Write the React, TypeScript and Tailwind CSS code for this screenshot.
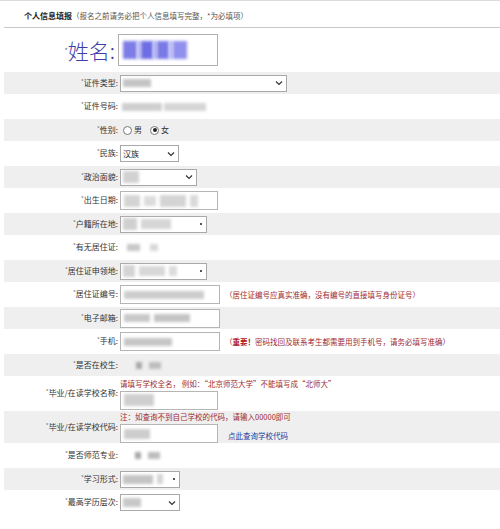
import React from "react";

const F = "font-['Noto_Sans_CJK_SC',_'Noto_Sans',_sans-serif]";

function Blur({ className }: { className: string }) {
  return <span className={`inline-block blur-[1.5px] ${className}`} />;
}

function Chevron() {
  return (
    <svg width="8" height="6" viewBox="0 0 8 6" className="shrink-0">
      <path d="M1 1.5 L4 4.5 L7 1.5" fill="none" stroke="#333" strokeWidth="1.2" />
    </svg>
  );
}

function Select({ w, children, chevron = true }: { w: string; children?: React.ReactNode; chevron?: boolean }) {
  return (
    <div className={`${w} h-[17px] border border-[#a9a9a9] bg-white flex items-center pl-[2px] pr-[3px] justify-between`}>
      <div className="flex items-center gap-[4px]">{children}</div>
      {chevron ? <Chevron /> : <span className="w-[2px] h-[2px] bg-[#555] mr-[1px]" />}
    </div>
  );
}

function Input({ w = "w-[100px]", children }: { w?: string; children?: React.ReactNode }) {
  return (
    <div className={`${w} h-[19px] border border-[#b5b5b5] bg-white flex items-center pl-[3px] gap-[4px] overflow-hidden`}>
      {children}
    </div>
  );
}

function Radio({ checked }: { checked?: boolean }) {
  return (
    <span className="inline-flex w-[9px] h-[9px] rounded-full border border-[#777] bg-white items-center justify-center">
      {checked && <span className="w-[4px] h-[4px] rounded-full bg-[#222]" />}
    </span>
  );
}

function Row({
  label,
  gray,
  tall,
  children,
}: {
  label: string;
  gray?: boolean;
  tall?: boolean;
  children?: React.ReactNode;
}) {
  return (
    <div className={`flex items-center ${tall ? "h-[32px]" : "h-[22px]"} ${gray ? "bg-[#efefef]" : ""}`}>
      <div className="w-[114px] text-right text-[8px] leading-[10px] text-[#333] whitespace-nowrap">
        <span className="text-[6px] text-[#777] relative top-[-2px]">*</span>
        {label}:
      </div>
      <div className="ml-[2px] flex items-center text-[8px] leading-[10px] text-[#333]">{children}</div>
    </div>
  );
}

export default function App() {
  return (
    <div className={`w-[500px] h-[529px] bg-white overflow-hidden ${F}`}>
      <div className="h-[1px] bg-[#dcdcdc]" />
      <div className="ml-[4px] h-[27px] border-b border-[#c9c9c9] flex items-center pl-[20px] pt-[3px] whitespace-nowrap leading-[10px]">
        <span className="text-[8px] font-bold text-[#222]">个人信息填报</span>
        <span className="text-[7.5px] text-[#555]">（报名之前请务必把个人信息填写完整，*为必填项）</span>
      </div>

      <div className="h-[44px] flex items-center">
        <div className="w-[115px] text-right leading-none whitespace-nowrap text-[#3d3dab]">
          <span className="text-[7px] relative top-[-6px] text-[#666]">*</span>
          <span className="text-[21px] font-light">姓名:</span>
        </div>
        <div className="ml-[3px] w-[100px] h-[32px] border border-[#b0b0b0] bg-white flex items-center pl-[4px]">
          <Blur className="w-[14px] h-[18px] bg-[#7d7de8]" />
          <Blur className="w-[4px] h-[18px] bg-[#b8b8f4]" />
          <Blur className="w-[12px] h-[18px] bg-[#6e6ee4]" />
          <Blur className="w-[4px] h-[18px] bg-[#b0b0f2]" />
          <Blur className="w-[12px] h-[18px] bg-[#7a7ae6]" />
          <Blur className="w-[4px] h-[18px] bg-[#b8b8f4]" />
          <Blur className="w-[14px] h-[18px] bg-[#9090ee]" />
        </div>
      </div>

      <div className="ml-[4px] flex flex-col gap-[1.5px]">
        <Row label="证件类型" gray>
          <Select w="w-[167px]">
            <Blur className="w-[28px] h-[8px] bg-[#c4c4c4]" />
          </Select>
        </Row>
        <Row label="证件号码">
          <div className="flex items-center gap-[2px] pl-[2px]">
            <Blur className="w-[40px] h-[8px] bg-[#cfcfcf]" />
            <Blur className="w-[42px] h-[8px] bg-[#d6d6d6]" />
          </div>
        </Row>
        <Row label="性别" gray>
          <div className="flex items-center gap-[2px] pl-[3px]">
            <Radio />
            <span>男</span>
            <span className="w-[4px]" />
            <Radio checked />
            <span>女</span>
          </div>
        </Row>
        <Row label="民族">
          <Select w="w-[59px]">
            <span className="text-[8px] text-[#222] leading-[10px]">汉族</span>
          </Select>
        </Row>
        <Row label="政治面貌" gray>
          <Select w="w-[77px]">
            <Blur className="w-[16px] h-[12px] bg-[#d2d2d2]" />
          </Select>
        </Row>
        <Row label="出生日期">
          <Input w="w-[98px]">
            <Blur className="w-[16px] h-[12px] bg-[#d4d4d4]" />
            <Blur className="w-[12px] h-[10px] bg-[#dcdcdc]" />
            <Blur className="w-[26px] h-[12px] bg-[#d4d4d4]" />
            <Blur className="w-[8px] h-[12px] bg-[#dadada]" />
          </Input>
        </Row>
        <Row label="户籍所在地" gray>
          <Select w="w-[87px]" chevron={false}>
            <Blur className="w-[14px] h-[12px] bg-[#d0d0d0]" />
            <Blur className="w-[30px] h-[10px] bg-[#d6d6d6]" />
          </Select>
        </Row>
        <Row label="有无居住证">
          <div className="flex items-center gap-[10px] pl-[7px]">
            <Blur className="w-[13px] h-[7px] bg-[#c8c8c8]" />
            <Blur className="w-[8px] h-[7px] bg-[#d8d8d8]" />
          </div>
        </Row>
        <Row label="居住证申领地" gray>
          <Select w="w-[87px]" chevron={false}>
            <Blur className="w-[12px] h-[12px] bg-[#d4d4d4]" />
            <Blur className="w-[26px] h-[10px] bg-[#d8d8d8]" />
            <Blur className="w-[8px] h-[10px] bg-[#dcdcdc]" />
          </Select>
        </Row>
        <Row label="居住证编号">
          <Input>
            <Blur className="w-[80px] h-[8px] bg-[#cdcdcd]" />
          </Input>
          <span className="ml-[5px] text-[7.5px] text-[#9e2a2f] whitespace-nowrap leading-[10px]">
            （居住证编号应真实准确，没有编号的直接填写身份证号）
          </span>
        </Row>
        <Row label="电子邮箱" gray>
          <Input>
            <Blur className="w-[26px] h-[8px] bg-[#c8c8c8]" />
            <Blur className="w-[36px] h-[8px] bg-[#c4c4c4]" />
          </Input>
        </Row>
        <Row label="手机">
          <Input>
            <Blur className="w-[48px] h-[8px] bg-[#c6c6c6]" />
          </Input>
          <span className="ml-[5px] text-[7.5px] text-[#9e2a2f] whitespace-nowrap leading-[10px]">
            （<span className="font-bold text-[#b0161c]">重要！</span>密码找回及联系考生都需要用到手机号，请务必填写准确）
          </span>
        </Row>
        <Row label="是否在校生" gray>
          <div className="flex items-center gap-[7px] pl-[16px]">
            <Blur className="w-[6px] h-[7px] bg-[#a8a8a8]" />
            <Blur className="w-[12px] h-[7px] bg-[#bdbdbd]" />
          </div>
        </Row>
        <Row label="毕业/在读学校名称" tall>
          <div className="flex flex-col gap-[2px] pt-[1px]">
            <span className="text-[7.5px] text-[#9e2a2f] whitespace-nowrap leading-[10px]">
              请填写学校全名， 例如：“北京师范大学”不能填写成“北师大”
            </span>
            <Input w="w-[98px]">
              <Blur className="w-[30px] h-[12px] bg-[#cfcfcf]" />
            </Input>
          </div>
        </Row>
        <Row label="毕业/在读学校代码" gray tall>
          <div className="flex flex-col gap-[2px] pt-[1px]">
            <span className="text-[7.5px] text-[#9e2a2f] whitespace-nowrap leading-[10px]">
              注：如查询不到自己学校的代码，请输入00000即可
            </span>
            <div className="flex items-end">
              <Input w="w-[98px]">
                <Blur className="w-[26px] h-[10px] bg-[#cdcdcd]" />
              </Input>
              <span className="ml-[10px] text-[7.5px] text-[#1f3b9a] whitespace-nowrap leading-[10px] mb-[2px]">
                点此查询学校代码
              </span>
            </div>
          </div>
        </Row>
        <Row label="是否师范专业">
          <div className="flex items-center gap-[7px] pl-[15px]">
            <Blur className="w-[6px] h-[7px] bg-[#a8a8a8]" />
            <Blur className="w-[12px] h-[7px] bg-[#bdbdbd]" />
          </div>
        </Row>
        <Row label="学习形式" gray>
          <Select w="w-[60px]" chevron={false}>
            <Blur className="w-[30px] h-[9px] bg-[#c4c4c4]" />
            <Blur className="w-[6px] h-[10px] bg-[#d6d6d6]" />
          </Select>
        </Row>
        <Row label="最高学历层次">
          <Select w="w-[60px]">
            <Blur className="w-[18px] h-[9px] bg-[#c8c8c8]" />
          </Select>
        </Row>
      </div>
    </div>
  );
}
